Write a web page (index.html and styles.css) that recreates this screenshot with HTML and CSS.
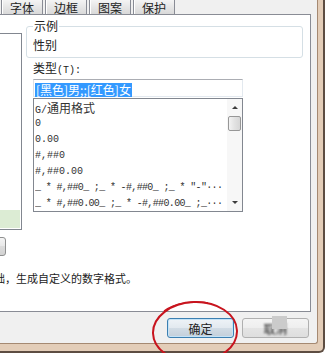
FILE: index.html
```html
<!DOCTYPE html>
<html>
  <head>
    <meta charset="utf-8">
    <title>设置单元格格式</title>
    <link rel="stylesheet" href="styles.css">
  </head>
  <body>
    <div class="window">
      <div class="client">
        <div class="tabs">
          <div class="tab">字体</div>
          <div class="tab">边框</div>
          <div class="tab">图案</div>
          <div class="tab">保护</div>
        </div>

        <div class="panel">
          <div class="left-col">
            <div class="category"><div class="category-sel"></div></div>
            <div class="small-btn"></div>
            <p class="hint">以现有格式为基础，生成自定义的数字格式。</p>
          </div>

          <div class="right-col">
            <fieldset class="sample">
              <legend>示例</legend>
              <div class="sample-text">性别</div>
            </fieldset>
            <div class="type-label">类型<span class="half">(T):</span></div>
            <div class="type-input"><span class="sel">[黑色]男;;[红色]女</span></div>
            <div class="list">
              <ul class="formats">
                <li>G/<span class="cjk">通用格式</span></li>
                <li>0</li>
                <li>0.00</li>
                <li>#,##0</li>
                <li>#,##0.00</li>
                <li class="long">_ * #,##0_ ;_ * -#,##0_ ;_ * "-"···</li>
                <li class="long">_ * #,##0.00_ ;_ * -#,##0.00_ ;_···</li>
              </ul>
              <div class="scrollbar">
                <div class="sb-btn"><span class="arrow-up"></span></div>
                <div class="sb-thumb"></div>
                <div class="sb-track"></div>
                <div class="sb-btn"><span class="arrow-down"></span></div>
              </div>
            </div>
          </div>
        </div>

        <div class="actions">
          <button class="btn btn-default">确定</button>
          <button class="btn btn-cancel"><span class="blurred">取消</span><span class="mosaic"></span></button>
        </div>
      </div>

      <!-- red mark drawn over the OK button -->
      <svg class="mark" width="92" height="66" viewBox="0 0 92 66">
        <ellipse cx="45" cy="33" rx="42" ry="30" fill="none" stroke="#c8141e" stroke-width="2" transform="rotate(-2 45 33)"/>
        <path d="M14 12 C 26 3, 44 2, 58 4" fill="none" stroke="#c8141e" stroke-width="1.5"/>
      </svg>
    </div>
  </body>
</html>
```

FILE: styles.css
```css
body { margin: 0; background: #fff; font-family: "Noto Sans CJK SC", "Liberation Sans", sans-serif; font-size: 12px; color: #222; overflow: hidden; }

.window { position: relative; width: 325px; height: 353px; box-sizing: border-box; border-right: 2px solid #5d4d42; border-bottom: 2px solid #5d4d42; border-bottom-right-radius: 6px; padding: 0 5px 7px 0; background: #e3cdb8; }
.client { height: 100%; box-sizing: border-box; display: flex; flex-direction: column; background: #f0f0f0; border-right: 1px solid #a58972; border-bottom: 1px solid #a58972; border-bottom-right-radius: 3px; padding-right: 6px; }

.tabs { display: flex; height: 14px; padding-left: 1px; gap: 2px; }
.tab { padding: 1px 8px 0; line-height: 13px; border-left: 1px solid #898c95; border-right: 1px solid #898c95; background: linear-gradient(#f4f4f4, #e6e6e6 50%, #d9d9d9); box-shadow: inset 1px 0 0 #fff; }

.panel { display: flex; margin-left: -100px; height: 298px; box-sizing: border-box; border: 1px solid #898c95; background: #fff; padding: 0 7px 0 16px; gap: 4px; }

.left-col { width: 105px; padding-top: 18px; }
.category { height: 197px; box-sizing: border-box; border: 1px solid #828790; padding: 1px; display: flex; flex-direction: column; justify-content: flex-end; }
.category-sel { height: 18px; background: #dcecd4; }
.small-btn { margin-top: 7px; width: 89px; height: 19px; box-sizing: border-box; border: 1px solid #8f9090; border-radius: 3px; background: linear-gradient(#f4f4f4, #e8e8e8 50%, #dcdcdc 50%, #d2d2d2); }
.hint { margin: 16px 0 0; font-size: 11px; line-height: 13px; white-space: nowrap; }

.right-col { width: 277px; }
.sample { margin: 4px 0 0; padding: 0 6px 5px; border: 1px solid #d5dfe5; border-radius: 3px; }
.sample legend { padding: 0 1px; line-height: 14px; }
.sample-text { padding-top: 5px; line-height: 14px; }

.type-label { margin: 3px 0 0 7px; line-height: 14px; }
.half { font-family: "Liberation Mono", monospace; font-size: 10px; }
.type-input { margin: 1px 0 0 7px; width: 210px; height: 18px; box-sizing: border-box; border: 1px solid #e3e9ef; border-top-color: #abadb3; border-left-color: #dbdfe6; padding: 1px; }
.sel { display: inline-block; line-height: 14px; padding: 0 1px; background: #3399ff; color: #fff; }

.list { display: flex; margin: 1px 0 0 7px; width: 210px; height: 114px; box-sizing: border-box; border: 1px solid #828790; }
.formats { flex: 1; min-width: 0; margin: 0; padding: 1px; list-style: none; font-family: "Liberation Mono", monospace; font-size: 10px; color: #333; }
.formats li { height: 16px; line-height: 16px; white-space: nowrap; overflow: hidden; }
.formats li.long { letter-spacing: -0.65px; }
.formats .cjk { font-family: "Noto Sans CJK SC", sans-serif; font-size: 12px; }

.scrollbar { width: 15px; display: flex; flex-direction: column; background: #f7f7f7; }
.sb-btn { height: 17px; display: flex; align-items: center; justify-content: center; }
.arrow-up { border-left: 3px solid transparent; border-right: 3px solid transparent; border-bottom: 3px solid #3c3c3c; }
.arrow-down { border-left: 3px solid transparent; border-right: 3px solid transparent; border-top: 3px solid #3c3c3c; }
.sb-thumb { height: 15px; margin: 0 1px; box-sizing: border-box; border: 1px solid #979797; border-radius: 2px; background: linear-gradient(90deg, #f3f3f3, #e2e2e2 50%, #d6d6d6); }
.sb-track { flex: 1; }

.actions { flex: 1; display: flex; justify-content: flex-end; align-items: flex-start; gap: 8px; padding: 6px 2px 0 0; }
.btn { width: 67px; height: 20px; box-sizing: border-box; padding: 0; font: inherit; color: #222; border: 1px solid #707070; border-radius: 3px; background: linear-gradient(#f2f2f2, #ebebeb 50%, #dddddd 50%, #cfcfcf); }
.btn-default { border-color: #3c7fb1; background: linear-gradient(#eef3f7, #e2e9ef 50%, #d2dce5 50%, #c3cfda); box-shadow: inset 0 0 0 1px #c4e3f7; }
.btn-cancel { position: relative; border-color: #b0b0b0; background: linear-gradient(#f4f4f4, #eeeeee 50%, #e4e4e4 50%, #dedede); }
.blurred { filter: blur(0.8px); }
.mosaic { position: absolute; left: 29px; top: -3px; width: 15px; height: 13px; background: #cbcbcb; }

.mark { position: absolute; left: 150px; top: 299px; overflow: visible; }
```
